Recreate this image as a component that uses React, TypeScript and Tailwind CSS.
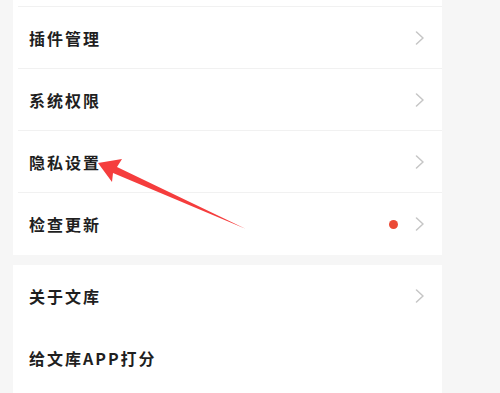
import React from "react";

type Row = { label: string; dot?: boolean; chevron?: boolean };

const groupA: Row[] = [
  { label: "插件管理", chevron: true },
  { label: "系统权限", chevron: true },
  { label: "隐私设置", chevron: true },
  { label: "检查更新", dot: true, chevron: true },
];

const groupB: Row[] = [
  { label: "关于文库", chevron: true },
  { label: "给文库APP打分" },
];

function Chevron() {
  return (
    <svg width="10" height="14" viewBox="0 0 10 14" fill="none" className="shrink-0">
      <path d="M1.5 1 L8 7 L1.5 13" stroke="#c6c6c6" strokeWidth="1.5" strokeLinecap="round" strokeLinejoin="round" />
    </svg>
  );
}

function SettingRow({ row, divider }: { row: Row; divider: boolean }) {
  return (
    <div className="relative flex h-[62px] items-center pl-4 pr-[17px]">
      <span className="flex-1 text-[16px] font-bold tracking-[2px] text-[#1f1f1f]">{row.label}</span>
      {row.dot && <span className="mr-[17px] h-[9px] w-[9px] rounded-full bg-[#eb4a36]" />}
      {row.chevron && <Chevron />}
      {divider && <div className="absolute bottom-0 left-[5px] right-0 h-px bg-[#f1f1f1]" />}
    </div>
  );
}

export default function App() {
  return (
    <div
      className="relative h-[393px] w-[500px] overflow-hidden bg-[#f6f6f6]"
      style={{ fontFamily: '"Noto Sans CJK SC", "Noto Sans", sans-serif' }}
    >
      <div className="ml-[13px] w-[429px]">
        <div className="bg-white">
          <div className="relative h-[7px]">
            <div className="absolute bottom-0 left-[5px] right-0 h-px bg-[#f1f1f1]" />
          </div>
          {groupA.map((r, i) => (
            <SettingRow key={r.label} row={r} divider={i < groupA.length - 1} />
          ))}
        </div>
        <div className="mt-[10px] bg-white pb-[10px]">
          {groupB.map((r) => (
            <SettingRow key={r.label} row={r} divider={false} />
          ))}
        </div>
      </div>

      <svg className="pointer-events-none absolute left-0 top-0" width="500" height="393" viewBox="0 0 500 393">
        <polygon points="98,163 122,159 117,167 246,229 113,173 112,182" fill="#f53d3d" />
      </svg>
    </div>
  );
}
